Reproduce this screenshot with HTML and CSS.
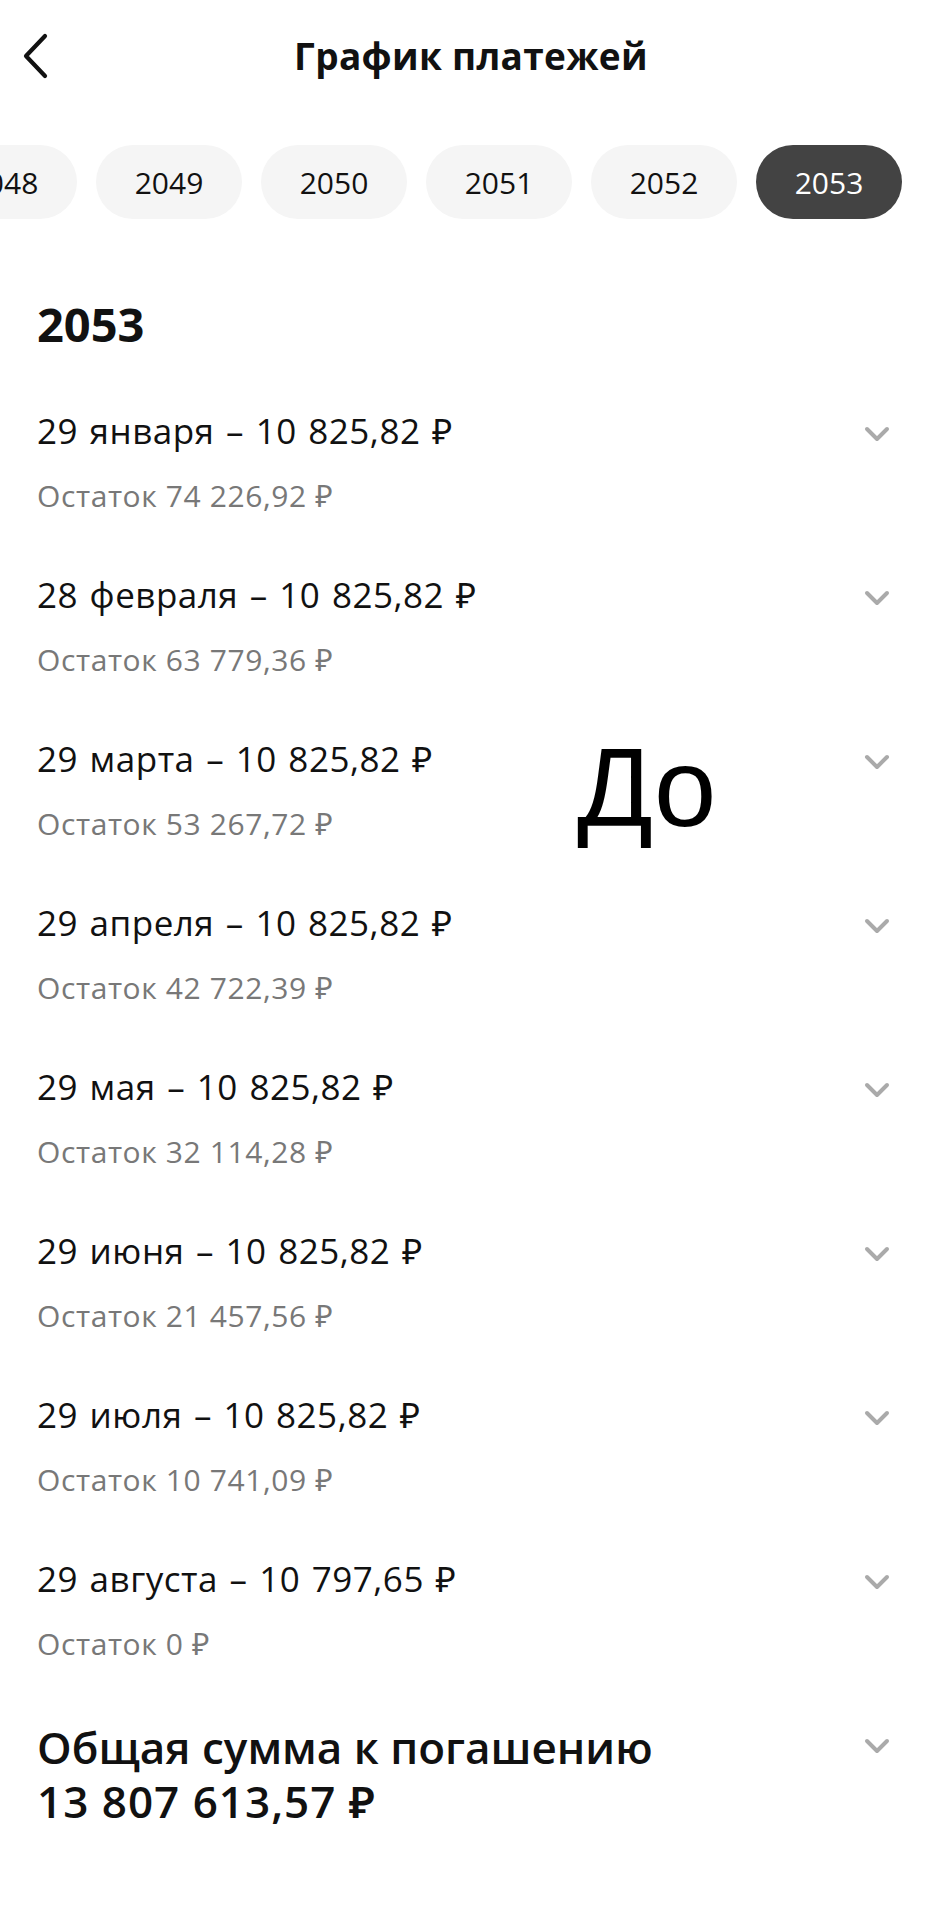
FILE: index.html
```html
<!DOCTYPE html>
<html lang="ru">
<head>
    <meta charset="UTF-8">
    <meta name="viewport" content="width=device-width, initial-scale=1.0">
    <title>График платежей</title>
    <link rel="stylesheet" href="styles.css">
</head>
<body>
<div class="page">
    <header class="header">
        <a class="back" href="#">
            <svg width="28" height="46" viewBox="0 0 28 46" fill="none">
                <path d="M24 3 L5 23 L24 43" stroke="#111" stroke-width="4.2" stroke-linecap="round" stroke-linejoin="round"/>
            </svg>
        </a>
        <h1 class="title">График платежей</h1>
        <span></span>
    </header>

    <div class="years">
        <div class="years-track">
            <button class="year">2048</button>
            <button class="year">2049</button>
            <button class="year">2050</button>
            <button class="year">2051</button>
            <button class="year">2052</button>
            <button class="year active">2053</button>
        </div>
    </div>

    <h2 class="year-title">2053</h2>

    <div class="payments">
        <div class="payment">
            <div class="payment-head"><span>29 января – 10 825,82 ₽</span><svg class="chev" viewBox="0 0 26 17"><path d="M3 3 L13 13 L23 3"/></svg></div>
            <div class="rest">Остаток 74 226,92 ₽</div>
        </div>
        <div class="payment">
            <div class="payment-head"><span>28 февраля – 10 825,82 ₽</span><svg class="chev" viewBox="0 0 26 17"><path d="M3 3 L13 13 L23 3"/></svg></div>
            <div class="rest">Остаток 63 779,36 ₽</div>
        </div>
        <div class="payment">
            <div class="payment-head"><span>29 марта – 10 825,82 ₽</span><svg class="chev" viewBox="0 0 26 17"><path d="M3 3 L13 13 L23 3"/></svg></div>
            <div class="rest">Остаток 53 267,72 ₽</div>
        </div>
        <div class="payment">
            <div class="payment-head"><span>29 апреля – 10 825,82 ₽</span><svg class="chev" viewBox="0 0 26 17"><path d="M3 3 L13 13 L23 3"/></svg></div>
            <div class="rest">Остаток 42 722,39 ₽</div>
        </div>
        <div class="payment">
            <div class="payment-head"><span>29 мая – 10 825,82 ₽</span><svg class="chev" viewBox="0 0 26 17"><path d="M3 3 L13 13 L23 3"/></svg></div>
            <div class="rest">Остаток 32 114,28 ₽</div>
        </div>
        <div class="payment">
            <div class="payment-head"><span>29 июня – 10 825,82 ₽</span><svg class="chev" viewBox="0 0 26 17"><path d="M3 3 L13 13 L23 3"/></svg></div>
            <div class="rest">Остаток 21 457,56 ₽</div>
        </div>
        <div class="payment">
            <div class="payment-head"><span>29 июля – 10 825,82 ₽</span><svg class="chev" viewBox="0 0 26 17"><path d="M3 3 L13 13 L23 3"/></svg></div>
            <div class="rest">Остаток 10 741,09 ₽</div>
        </div>
        <div class="payment">
            <div class="payment-head"><span>29 августа – 10 797,65 ₽</span><svg class="chev" viewBox="0 0 26 17"><path d="M3 3 L13 13 L23 3"/></svg></div>
            <div class="rest">Остаток 0 ₽</div>
        </div>
    </div>

    <div class="total">
        <div class="total-text">
            <div>Общая сумма к погашению</div>
            <div class="total-sum">13 807 613,57 ₽</div>
        </div>
        <svg class="chev" viewBox="0 0 26 17"><path d="M3 3 L13 13 L23 3"/></svg>
    </div>

    <div class="stamp">До</div>
</div>
</body>
</html>
```

FILE: styles.css
```css
body {
    margin: 0;
    font-family: "Open Sans", "Noto Sans", sans-serif;
    color: #111;
    background: #fff;
}
.page {
    position: relative;
    width: 942px;
    min-height: 1920px;
    overflow: hidden;
}
.header {
    display: grid;
    grid-template-columns: 1fr auto 1fr;
    align-items: center;
    padding-top: 32px;
    height: 48px;
}
.back {
    display: flex;
    padding-left: 21px;
}
.title {
    margin: 0;
    font-size: 37px;
    font-weight: 700;
    line-height: 48px;
    letter-spacing: 0.3px;
}
.years {
    margin-top: 65px;
    overflow: hidden;
}
.years-track {
    display: flex;
    gap: 19px;
    margin-left: -69px;
}
.year {
    flex: 0 0 146px;
    height: 74px;
    border: none;
    border-radius: 37px;
    background: #f5f5f5;
    color: #111;
    font-family: inherit;
    font-size: 30px;
    padding: 0;
}
.year.active {
    background: #434343;
    color: #fff;
}
.year-title {
    margin: 77px 0 0;
    padding-left: 37px;
    font-size: 47px;
    font-weight: 700;
    line-height: 56px;
}
.payments {
    margin-top: 26px;
}
.payment {
    padding: 31px 52px 26px 37px;
    height: 107px;
}
.payment-head {
    display: flex;
    justify-content: space-between;
    align-items: center;
    font-size: 35px;
    line-height: 44px;
    letter-spacing: 0.5px;
    word-spacing: 2px;
}
.rest {
    margin-top: 23px;
    font-size: 30px;
    line-height: 40px;
    letter-spacing: 0.6px;
    color: #787878;
}
.chev {
    width: 26px;
    height: 17px;
    fill: none;
    stroke: #aaa;
    stroke-width: 4;
    stroke-linecap: round;
    stroke-linejoin: round;
}
.payment-head .chev {
    margin-top: 7px;
}
.total {
    display: flex;
    justify-content: space-between;
    align-items: flex-start;
    margin-top: 30px;
    padding: 0 52px 0 37px;
}
.total .chev {
    margin-top: 18px;
}
.total-text {
    font-size: 44px;
    font-weight: 600;
    line-height: 54px;
}
.total-sum {
    letter-spacing: 1px;
}
.stamp {
    position: absolute;
    left: 577px;
    top: 732px;
    font-family: "Liberation Sans", Arial, sans-serif;
    font-size: 112px;
    line-height: 112px;
    color: #000;
}
```
